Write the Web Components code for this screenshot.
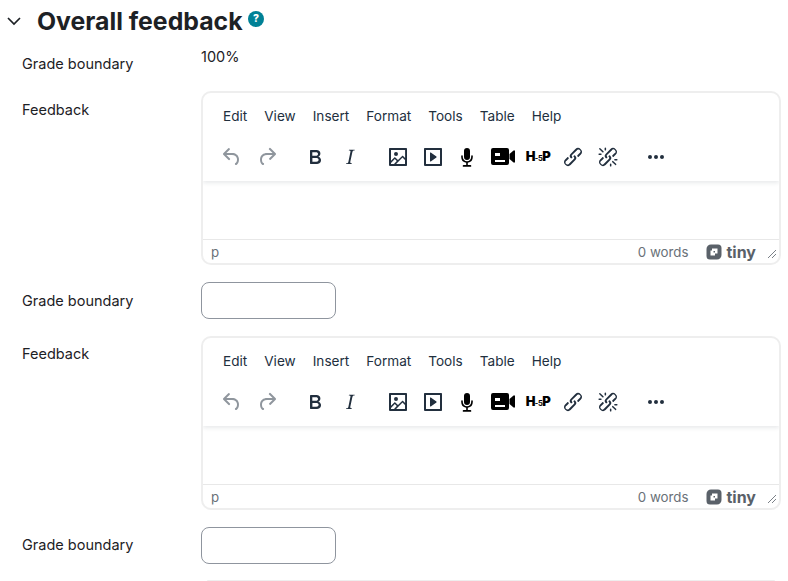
<!DOCTYPE html>
<html>
<head>
<meta charset="utf-8">
<title>Overall feedback</title>
<style>
    html, body {
        background: #fff;
        margin: 0;
        height: 581px;
        overflow: hidden;
    }
    body {
        color: #1d2125;
        font-family: Inter, "Liberation Sans", sans-serif;
    }
</style>
</head>
<body>
<fb-heading>Overall feedback</fb-heading>
<fb-row label="Grade boundary" static><span>100%</span></fb-row>
<fb-row label="Feedback"><fb-editor></fb-editor></fb-row>
<fb-row label="Grade boundary"><fb-input></fb-input></fb-row>
<fb-row label="Feedback" raised><fb-editor></fb-editor></fb-row>
<fb-row label="Grade boundary" raised tight><fb-input></fb-input></fb-row>
<fb-row><fb-edge></fb-edge></fb-row>

<script>
(function () {
    const ICONS = {
        undo: 'M6.4 8H12c3.7 0 6.2 2 6.8 5.1.6 2.7-.4 5.6-2.3 6.8a1 1 0 0 1-1-1.8c1.1-.6 1.8-2.7 1.4-4.6-.5-2.1-2.1-3.5-4.9-3.5H6.4l3.3 3.3a1 1 0 1 1-1.4 1.4l-5-5a1 1 0 0 1 0-1.4l5-5a1 1 0 0 1 1.4 1.4L6.4 8Z',
        redo: 'M17.6 10H12c-2.8 0-4.4 1.4-4.9 3.5-.4 2 .3 4 1.4 4.6a1 1 0 1 1-1 1.8c-2-1.2-2.9-4.1-2.3-6.8.6-3 3-5.1 6.8-5.1h5.6l-3.3-3.3a1 1 0 1 1 1.4-1.4l5 5a1 1 0 0 1 0 1.4l-5 5a1 1 0 0 1-1.4-1.4l3.3-3.3Z',
        bold: 'M7.8 19c-.3 0-.5 0-.6-.2l-.2-.5V5.7c0-.2 0-.4.2-.5l.6-.2h5c1.5 0 2.7.3 3.5 1 .7.6 1.1 1.4 1.1 2.5a3 3 0 0 1-.6 1.9c-.4.6-1 1-1.6 1.2.4.1.9.3 1.3.6s.8.7 1 1.2c.4.4.5 1 .5 1.6 0 1.3-.4 2.3-1.3 3-.8.7-2.1 1-3.8 1H7.8Zm5-8.3c.6 0 1.2-.1 1.6-.5.4-.3.6-.7.6-1.3 0-1.1-.8-1.7-2.3-1.7H9.3v3.5h3.4Zm.5 6c.7 0 1.3-.1 1.7-.4.4-.4.6-.9.6-1.5s-.2-1-.7-1.4c-.4-.3-1-.4-2-.4H9.4v3.8h4Z',
        italic: 'M16.7 4.7l-.1.9h-.3c-.6 0-1 0-1.4.3-.3.3-.4.6-.5 1.1l-2.1 9.8v.6c0 .5.4.8 1.4.8h.2l-.2.8H8l.2-.8h.2c1.1 0 1.8-.5 2-1.5l2-9.8.1-.5c0-.6-.4-.8-1.4-.8h-.3l.2-.9h5.8Z',
        image: 'm5 15.7 3.3-3.2c.3-.3.7-.3 1 0L12 15l4.1-4c.3-.4.8-.4 1 0l2 1.9V5H5v10.7ZM5 18V19h3l2.8-2.9-2-2L5 17.9Zm14-3-2.5-2.4-6.4 6.5H19v-4ZM4 3h16c.6 0 1 .4 1 1v16c0 .6-.4 1-1 1H4a1 1 0 0 1-1-1V4c0-.6.4-1 1-1Zm6 8a2 2 0 1 0 0-4 2 2 0 0 0 0 4Z',
        media: 'M4 3h16c.6 0 1 .4 1 1v16c0 .6-.4 1-1 1H4a1 1 0 0 1-1-1V4c0-.6.4-1 1-1Zm1 2v14h14V5H5Zm4.8 2.6 5.6 4a.5.5 0 0 1 0 .8l-5.6 4A.5.5 0 0 1 9 16V8a.5.5 0 0 1 .8-.4Z',
        mic: 'M12 3a3 3 0 0 0-3 3v6a3 3 0 0 0 6 0V6a3 3 0 0 0-3-3ZM7 10.200a.8.8 0 0 1 .8.8V12a4.200 4.200 0 0 0 8.400 0v-1a.8.8 0 0 1 1.600 0V12a5.800 5.800 0 0 1-5 5.700V20h2.600a.9.9 0 0 1 0 1.800H8.600a.9.9 0 0 1 0-1.800h2.600v-2.300A5.800 5.800 0 0 1 6.200 12v-1a.8.8 0 0 1 .8-.8Z',
        link: 'M6.2 12.3a1 1 0 0 1 1.4 1.4l-2 2a2 2 0 1 0 2.6 2.8l4.8-4.8a1 1 0 0 0 0-1.4 1 1 0 1 1 1.400-1.300 2.900 2.900 0 0 1 0 4L9.600 20a3.900 3.900 0 0 1-5.500-5.500l2-2Zm11.600-.6a1 1 0 0 1-1.400-1.400l2-2a2 2 0 1 0-2.600-2.800L11 10a1 1 0 0 0 0 1.400A1 1 0 1 1 9.600 13a2.900 2.900 0 0 1 0-4L14.400 4a3.900 3.900 0 0 1 5.500 5.500l-2 2Z',
        unlink: 'M6.200 12.300a1 1 0 0 1 1.400 1.400l-2.100 2a2 2 0 1 0 2.700 2.800l4.800-4.800a1 1 0 0 0 0-1.400 1 1 0 1 1 1.400-1.300 2.900 2.900 0 0 1 0 4L9.600 20a3.900 3.900 0 0 1-5.500-5.500l2-2Zm11.600-.6a1 1 0 0 1-1.400-1.400l2.100-2a2 2 0 1 0-2.700-2.800L11 10a1 1 0 0 0 0 1.400A1 1 0 1 1 9.600 13a2.900 2.900 0 0 1 0-4L14.400 4a3.900 3.900 0 0 1 5.500 5.500l-2 2ZM7.600 6.300a.8.800 0 0 1-1 1.100L3.300 4.200a.7.700 0 1 1 1-1l3.200 3.100ZM5.100 8.600a.8.800 0 0 1 0 1.500H3a.8.800 0 0 1 0-1.500H5Zm5-3.500a.8.800 0 0 1-1.500 0V3a.8.800 0 0 1 1.500 0v2Zm6 11.800a.8.800 0 0 1 1-1l3.200 3.200a.8.800 0 0 1-1 1L16 17Zm-2.200 2a.8.800 0 0 1 1.500 0V21a.8.800 0 0 1-1.500 0V19Zm5-3.500a.7.700 0 1 1 0-1.500H21a.8.800 0 0 1 0 1.500H19Z',
        more: 'M6 10a2 2 0 0 0-2 2c0 1.100.9 2 2 2a2 2 0 0 0 2-2 2 2 0 0 0-2-2Zm12 0a2 2 0 0 0-2 2c0 1.100.9 2 2 2a2 2 0 0 0 2-2 2 2 0 0 0-2-2Zm-6 0a2 2 0 0 0-2 2c0 1.100.9 2 2 2a2 2 0 0 0 2-2 2 2 0 0 0-2-2Z'
    };

    function icon(name) {
        return `<svg viewBox="0 0 24 24" width="24" height="24"><path d="${ICONS[name]}"/></svg>`;
    }

    const $heading = document.createElement('template');
    $heading.innerHTML = `
    <style>
        :host {
            align-items: center;
            display: flex;
            height: 42px;
            padding-left: 6px;
        }
        .chev { width: 16px; height: 16px; margin-right: 15px; }
        h3 {
            color: #1d2125;
            font-size: 24.800px;
            font-weight: 700;
            line-height: 42px;
            margin: 0;
        }
        .help {
            align-items: center;
            background: #008196;
            border-radius: 50%;
            color: #fff;
            display: inline-flex;
            font-size: 10.500px;
            font-weight: 800;
            height: 16px;
            justify-content: center;
            margin: -5px 0 0 5.500px;
            width: 16px;
        }
    </style>
    <svg class="chev" viewBox="0 0 16 16"><path d="M2 5l6 6 6-6" fill="none" stroke="#1d2125" stroke-width="1.700"/></svg>
    <h3><slot></slot></h3>
    <span class="help">?</span>
    `;

    class FbHeading extends HTMLElement {
        constructor() {
            super();
            this.attachShadow({ mode: 'open' });
            this.shadowRoot.appendChild($heading.content.cloneNode(true));
        }
    }

    const $row = document.createElement('template');
    $row.innerHTML = `
    <style>
        :host {
            display: grid;
            font-size: 14.500px;
            grid-template-columns: 201px 580px;
            line-height: 22px;
            margin-bottom: 17px;
        }
        :host([tight]) { margin-bottom: 16px; }
        .label { padding-left: 22px; padding-top: 8px; }
        :host([raised]) .label { padding-top: 7px; }
        :host([static]) { margin-bottom: 16px; }
        :host([static]) .label { padding-top: 11px; }
        :host([static]) .field { padding-top: 4px; }
    </style>
    <div class="label"></div>
    <div class="field"><slot></slot></div>
    `;

    class FbRow extends HTMLElement {
        constructor() {
            super();
            this.attachShadow({ mode: 'open' });
            this.shadowRoot.appendChild($row.content.cloneNode(true));
        }

        connectedCallback() {
            this.shadowRoot.querySelector('.label').textContent = this.getAttribute('label') || '';
        }
    }

    const $input = document.createElement('template');
    $input.innerHTML = `
    <style>
        :host { display: block; }
        input {
            background: #fff;
            border: 1px solid #8f959e;
            border-radius: 8px;
            box-sizing: border-box;
            display: block;
            height: 37px;
            width: 135px;
        }
    </style>
    <input type="text">
    `;

    class FbInput extends HTMLElement {
        constructor() {
            super();
            this.attachShadow({ mode: 'open' });
            this.shadowRoot.appendChild($input.content.cloneNode(true));
        }
    }

    // top edge of the editor that the window cuts off
    const $edge = document.createElement('template');
    $edge.innerHTML = `
    <style>
        :host {
            border-radius: 10px 10px 0 0;
            border-top: 1px solid #eeeeee;
            display: block;
            height: 0;
            margin: 0 6px;
        }
    </style>
    `;

    class FbEdge extends HTMLElement {
        constructor() {
            super();
            this.attachShadow({ mode: 'open' });
            this.shadowRoot.appendChild($edge.content.cloneNode(true));
        }
    }

    const $editor = document.createElement('template');
    $editor.innerHTML = `
    <style>
        :host {
            border: 2px solid #eeeeee;
            border-radius: 10px;
            box-sizing: border-box;
            display: block;
            height: 174px;
            overflow: hidden;
        }
        .head {
            box-shadow: 0 2px 4px rgba(34, 47, 62, .1);
            height: 88px;
            position: relative;
        }
        .menu {
            color: #222f3e;
            display: flex;
            font-size: 13.600px;
            gap: 17px;
            height: 46px;
            line-height: 47px;
            padding-left: 20px;
        }
        .bar {
            display: flex;
            height: 35px;
            padding-left: 11.500px;
        }
        .group { display: flex; margin-right: 12px; }
        .group.wide { margin-left: .7px; margin-right: 13px; }
        .group.wide .btn { width: 35px; }
        .btn {
            align-items: center;
            display: flex;
            fill: #222f3e;
            height: 35px;
            justify-content: center;
            width: 35.300px;
        }
        .btn.off { opacity: .5; }
        .btn.black { fill: #000; }
        .btn.mic svg { margin-right: 1px; }
        .h5p {
            color: #000;
            display: flex;
            align-items: baseline;
            font-size: 13px;
            font-weight: 900;
            letter-spacing: -.6px;
            line-height: 1;
        }
        .h5p small {
            font-size: 7.500px;
            font-weight: 700;
            letter-spacing: -.2px;
            margin-right: -.5px;
        }
        .body { height: 58px; }
        .status {
            align-items: center;
            border-top: 1px solid #e8e8e8;
            color: #6a7178;
            display: flex;
            font-size: 13.300px;
            height: 23px;
            padding: 0 2px 0 8px;
        }
        .words { margin-left: auto; }
        .tiny {
            align-items: center;
            color: #5a6169;
            display: flex;
            font-size: 16px;
            font-weight: 700;
            margin-left: 18px;
        }
        .tiny svg { margin-right: 4px; }
        .grip { margin-left: 11px; margin-top: 5px; }
    </style>
    <div class="head">
        <div class="menu"><span>Edit</span><span>View</span><span>Insert</span><span>Format</span><span>Tools</span><span>Table</span><span>Help</span></div>
        <div class="bar">
            <div class="group">
                <div class="btn off">${icon('undo')}</div>
                <div class="btn off">${icon('redo')}</div>
            </div>
            <div class="group">
                <div class="btn">${icon('bold')}</div>
                <div class="btn">${icon('italic')}</div>
            </div>
            <div class="group wide">
                <div class="btn">${icon('image')}</div>
                <div class="btn">${icon('media')}</div>
                <div class="btn black mic">${icon('mic')}</div>
                <div class="btn black"><svg viewBox="0 0 24 17" width="24" height="17"><path fill-rule="evenodd" d="M2 0h14a2 2 0 0 1 2 2v13a2 2 0 0 1-2 2H2a2 2 0 0 1-2-2V2a2 2 0 0 1 2-2Zm2 5v3h5V5H4Zm0 7v2h10v-2H4Z"/><path d="m18.500 6 4-3.500H24v12h-1.500l-4-3.500V6Z"/></svg></div>
                <div class="btn"><span class="h5p">H<small>-5</small>P</span></div>
                <div class="btn">${icon('link')}</div>
                <div class="btn">${icon('unlink')}</div>
            </div>
            <div class="group">
                <div class="btn">${icon('more')}</div>
            </div>
        </div>
    </div>
    <div class="body"></div>
    <div class="status">
        <span>p</span>
        <span class="words">0 words</span>
        <span class="tiny">
            <svg viewBox="0 0 16 16" width="16" height="16"><path fill-rule="evenodd" fill="#5a6169" d="M5 .5h7A3.500 3.500 0 0 1 15.500 4v7a4.500 4.500 0 0 1-4.500 4.500H4A3.500 3.500 0 0 1 .5 12V5A4.500 4.500 0 0 1 5 .5ZM6 4.500v2H4.500v5H9V9.500h2.500v-5H6Zm1.500 2.500h1.500v1.500H7.500V7Z"/></svg>tiny</span>
        <svg class="grip" viewBox="0 0 10 10" width="10" height="10"><path d="M9 1 1 9M9 5 5 9" stroke="#7a8087" fill="none"/></svg>
    </div>
    `;

    class FbEditor extends HTMLElement {
        constructor() {
            super();
            this.attachShadow({ mode: 'open' });
            this.shadowRoot.appendChild($editor.content.cloneNode(true));
        }
    }

    customElements.define('fb-heading', FbHeading);
    customElements.define('fb-row', FbRow);
    customElements.define('fb-input', FbInput);
    customElements.define('fb-edge', FbEdge);
    customElements.define('fb-editor', FbEditor);
})();
</script>
</body>
</html>
